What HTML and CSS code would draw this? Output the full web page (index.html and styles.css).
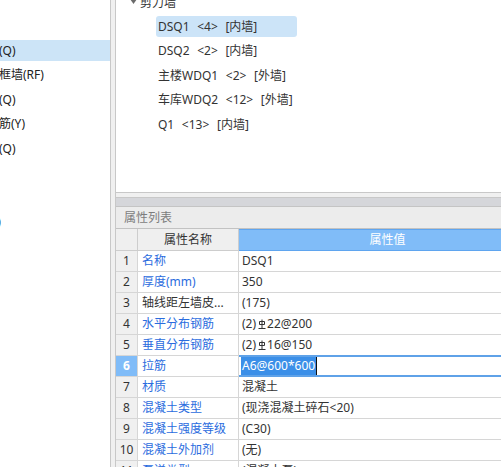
FILE: index.html
```html
<!DOCTYPE html>
<html lang="zh">
<head>
<meta charset="utf-8">
<title>属性列表</title>
<link rel="stylesheet" href="styles.css">
</head>
<body>
<div class="app">
  <aside class="nav">
    <ul class="nav-list">
      <li class="nav-item is-selected"><span class="nav-label">剪力墙(Q)</span></li>
      <li class="nav-item"><span class="nav-label">人防门框墙(RF)</span></li>
      <li class="nav-item"><span class="nav-label">砌体墙(Q)</span></li>
      <li class="nav-item"><span class="nav-label">砌体加筋(Y)</span></li>
      <li class="nav-item"><span class="nav-label">保温墙(Q)</span></li>
      <li class="nav-item"><span class="nav-label">幕墙</span></li>
      <li class="nav-item"><span class="nav-label">墙洞</span></li>
      <li class="nav-item"><span class="nav-label">墙垛(E)</span></li>
    </ul>
  </aside>
  <div class="splitter"></div>
  <main class="main">
    <section class="tree">
      <ul class="tree-list">
        <li class="tree-row tree-group">
          <svg class="caret" width="7" height="5" viewBox="0 0 7 5"><path d="M0 0h7L3.5 5z" fill="#6b6b6b"/></svg>
          <span>剪力墙</span>
        </li>
        <li class="tree-row"><span class="tree-label is-selected">DSQ1 &lt;4&gt; [内墙]</span></li>
        <li class="tree-row"><span class="tree-label">DSQ2 &lt;2&gt; [内墙]</span></li>
        <li class="tree-row"><span class="tree-label">主楼WDQ1 &lt;2&gt; [外墙]</span></li>
        <li class="tree-row"><span class="tree-label">车库WDQ2 &lt;12&gt; [外墙]</span></li>
        <li class="tree-row"><span class="tree-label">Q1 &lt;13&gt; [内墙]</span></li>
      </ul>
    </section>
    <div class="sep-light"></div>
    <div class="sep-dark"></div>
    <div class="panel-title">属性列表</div>
    <div class="props">
      <div class="cell head"></div>
      <div class="cell head">属性名称</div>
      <div class="cell head head-value">属性值</div>

      <div class="cell cell-num">1</div>
      <div class="cell cell-name">名称</div>
      <div class="cell cell-value">DSQ1</div>

      <div class="cell cell-num">2</div>
      <div class="cell cell-name">厚度(mm)</div>
      <div class="cell cell-value">350</div>

      <div class="cell cell-num">3</div>
      <div class="cell cell-name is-plain">轴线距左墙皮...</div>
      <div class="cell cell-value">(175)</div>

      <div class="cell cell-num">4</div>
      <div class="cell cell-name">水平分布钢筋</div>
      <div class="cell cell-value">(2)<svg class="rebar" width="8" height="10" viewBox="0 0 8 10"><path d="M4 0.5V9M1.5 2.5h5v3h-5zM0.5 9.5h7" fill="none" stroke="#333" stroke-width="1"/></svg>22@200</div>

      <div class="cell cell-num">5</div>
      <div class="cell cell-name">垂直分布钢筋</div>
      <div class="cell cell-value">(2)<svg class="rebar" width="8" height="10" viewBox="0 0 8 10"><path d="M4 0.5V9M1.5 2.5h5v3h-5zM0.5 9.5h7" fill="none" stroke="#333" stroke-width="1"/></svg>16@150</div>

      <div class="cell cell-num is-active">6</div>
      <div class="cell cell-name">拉筋</div>
      <div class="cell cell-value is-editing"><span class="sel">A6@600*600</span></div>

      <div class="cell cell-num">7</div>
      <div class="cell cell-name">材质</div>
      <div class="cell cell-value">混凝土</div>

      <div class="cell cell-num">8</div>
      <div class="cell cell-name">混凝土类型</div>
      <div class="cell cell-value">(现浇混凝土碎石&lt;20)</div>

      <div class="cell cell-num">9</div>
      <div class="cell cell-name">混凝土强度等级</div>
      <div class="cell cell-value">(C30)</div>

      <div class="cell cell-num">10</div>
      <div class="cell cell-name">混凝土外加剂</div>
      <div class="cell cell-value">(无)</div>

      <div class="cell cell-num">11</div>
      <div class="cell cell-name">泵送类型</div>
      <div class="cell cell-value">(混凝土泵)</div>
    </div>
  </main>
</div>
</body>
</html>
```

FILE: styles.css
```css
* {
  box-sizing: border-box;
  margin: 0;
  padding: 0;
}

html,
body {
  width: 501px;
  height: 467px;
  overflow: hidden;
  background: #ffffff;
}

body {
  font-family: "Noto Sans", "Noto Sans CJK SC", sans-serif;
  font-size: 12px;
  color: #333333;
}

.app {
  display: flex;
  height: 467px;
}

/* left navigation tree */
.nav {
  width: 111px;
  flex: none;
  border-right: 1px solid #c8c8c8;
  overflow: hidden;
  padding-top: 38px;
}

.nav-list {
  list-style: none;
}

.nav-item {
  height: 24.5px;
  display: flex;
  align-items: center;
}

.nav-label {
  display: block;
  width: 100%;
  height: 21px;
  line-height: 21px;
  text-indent: -37px;
  white-space: nowrap;
  overflow: hidden;
  color: #222222;
}

.nav-item.is-selected .nav-label {
  background: #cce4f7;
}

.splitter {
  width: 5px;
  flex: none;
  background: #f0f0f0;
  border-right: 1px solid #c8c8c8;
}

/* right side */
.main {
  flex: 1;
  min-width: 0;
  overflow: hidden;
  display: flex;
  flex-direction: column;
}

.tree {
  height: 193px;
  flex: none;
  border-bottom: 1px solid #c8c8c8;
  overflow: hidden;
}

.tree-list {
  list-style: none;
  margin-top: -10.5px;
}

.tree-row {
  height: 24.5px;
  display: flex;
  align-items: center;
  padding-left: 40px;
  white-space: nowrap;
}

.tree-group {
  padding-left: 14px;
  gap: 3px;
}

.caret {
  display: block;
}

.tree-label {
  display: block;
  width: 141px;
  height: 21px;
  line-height: 21px;
  padding-left: 2px;
  border-radius: 3px;
  word-spacing: 4.5px;
}

.tree-label.is-selected {
  background: #cce4f8;
}

.sep-light {
  height: 5px;
  flex: none;
  background: #f0f0f0;
  border-bottom: 1px solid #c8c8c8;
}

.sep-dark {
  height: 9px;
  flex: none;
  background: #d5d6da;
  border-bottom: 1px solid #c4c4c4;
}

.panel-title {
  height: 22px;
  flex: none;
  line-height: 21px;
  padding-left: 8px;
  background: #ececec;
  border-bottom: 1px solid #c2c2c2;
  color: #7d7d7d;
}

/* property grid */
.props {
  display: grid;
  grid-template-columns: 22px 101px 298px;
  flex: none;
}

.cell {
  height: 21px;
  line-height: 20px;
  border-right: 1px solid #d6d6d6;
  border-bottom: 1px solid #d6d6d6;
  white-space: nowrap;
  overflow: hidden;
}

.head {
  height: 22px;
  line-height: 21px;
  text-align: center;
  background: #efefef;
  border-color: #cdcdcd;
  color: #333333;
}

.head-value {
  background: #80bcf8;
  color: #ffffff;
  line-height: 20px;
  border-top: 1px solid #5fa5ef;
  border-bottom-color: #5fa5ef;
}

.cell-num {
  background: #f0f0f0;
  text-align: center;
  color: #333333;
}

.cell-num.is-active {
  background: #80bcf8;
  color: #ffffff;
  font-weight: bold;
}

.cell-name {
  padding-left: 4px;
  color: #2b6cde;
}

.cell-name.is-plain {
  color: #333333;
}

.cell-value {
  padding-left: 3px;
  color: #333333;
}

.rebar {
  display: inline-block;
  vertical-align: -1px;
  margin: 0 1px 0 2px;
}

.cell-value.is-editing {
  padding-left: 2px;
  border-bottom-color: #5fa2e8;
  box-shadow: 0 -1px 0 #5fa2e8, inset 0 1px 0 #5fa2e8, inset 0 -1px 0 #5fa2e8;
}

.sel {
  display: inline-block;
  vertical-align: top;
  margin-top: 1px;
  height: 18px;
  line-height: 18px;
  padding: 0 1px;
  background: #3b8fe8;
  color: #ffffff;
  border-right: 1px solid #111111;
}
```
